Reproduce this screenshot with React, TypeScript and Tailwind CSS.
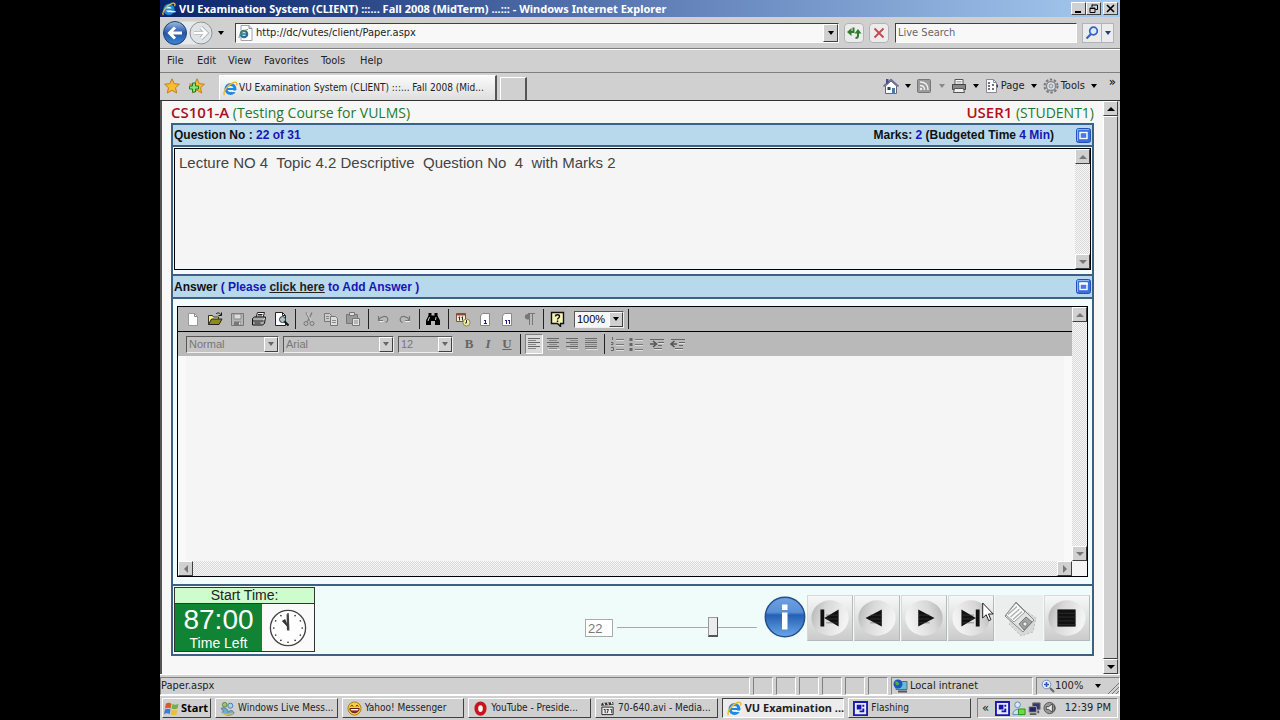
import { useState, type ReactNode } from "react";

const raised =
  "border border-t-white border-l-white border-r-[#404040] border-b-[#404040] bg-[#d0d0d0]";
const sunken = "border border-t-[#808080] border-l-[#808080] border-r-white border-b-white";

function Caret({ className = "text-black" }: { className?: string }) {
  return (
    <svg viewBox="0 0 6 4" className={`h-1 w-1.5 shrink-0 ${className}`} aria-hidden="true">
      <path d="M0 0h6L3 4z" fill="currentColor" />
    </svg>
  );
}

function IeLogo({ className = "h-4 w-4" }: { className?: string }) {
  return (
    <svg viewBox="0 0 16 16" className={`shrink-0 ${className}`} aria-hidden="true">
      <circle cx="8" cy="8.500" r="4.800" fill="#eaf6ff" stroke="#2388d8" strokeWidth="3.200" />
      <path d="M4 8.500h9" stroke="#2388d8" strokeWidth="2.200" />
      <path d="M9.500 10.200h6v1.600H9.500z" fill="#eaf6ff" />
      <path d="M1.600 15C-.8 12 5.500 3.500 11.500 1.600c3-.8 4 .8 2.800 3.200" fill="none" stroke="#efb92e" strokeWidth="1.500" />
    </svg>
  );
}

function DocIe() {
  return (
    <svg viewBox="0 0 16 16" className="h-4 w-4 shrink-0" aria-hidden="true">
      <path d="M3 .5h8l3 3v12H3z" fill="#fff" stroke="#a0a4aa" />
      <path d="M11 .5v3h3" fill="#dde" stroke="#8a8f98" />
      <circle cx="6" cy="9" r="3.200" fill="#dff1ff" stroke="#2a6f9c" strokeWidth="2.200" />
      <path d="M3.500 9h5.500" stroke="#2a6f9c" strokeWidth="1.500" />
      <path d="M1 13C1 9 6 5 10 4.500" fill="none" stroke="#6aa53b" />
    </svg>
  );
}

function Arrow({ dir, active = true }: { dir: "up" | "down" | "left" | "right"; active?: boolean }) {
  const paths = { up: "M0 6h8L4 2z", down: "M0 2h8L4 6z", left: "M6 0v8L2 4z", right: "M2 0v8l4-4z" };
  return (
    <svg viewBox="0 0 8 8" className="h-2 w-2" aria-hidden="true">
      <path d={paths[dir]} fill={active ? "#000" : "#777"} />
    </svg>
  );
}

function ScrollButton({ dir, active }: { dir: "up" | "down" | "left" | "right"; active?: boolean }) {
  return (
    <button
      type="button"
      aria-label={`Scroll ${dir}`}
      className={`flex h-[15px] w-[15px] shrink-0 items-center justify-center ${raised}`}
    >
      <Arrow dir={dir} active={active} />
    </button>
  );
}

const dither = "bg-[repeating-conic-gradient(#f8f8f8_0_25%,#d8d8d8_0_50%)] bg-[length:2px_2px]";

function VScroll() {
  return (
    <div className={`flex w-[15px] shrink-0 flex-col justify-between ${dither}`}>
      <ScrollButton dir="up" active={false} />
      <ScrollButton dir="down" active={false} />
    </div>
  );
}

function Tool({ label, children }: { label: string; children: ReactNode }) {
  return (
    <button type="button" aria-label={label} title={label} className="flex h-5 w-[22px] shrink-0 items-center justify-center">
      <svg viewBox="0 0 16 16" className="h-4 w-4" fill="none" aria-hidden="true">
        {children}
      </svg>
    </button>
  );
}

function Sep({ className = "w-[6px]" }: { className?: string }) {
  return (
    <span className={`flex shrink-0 justify-center ${className}`}>
      <span className="h-5 w-px bg-[#222]" />
    </span>
  );
}

function Combo({
  label,
  options,
  className,
  active = false,
}: {
  label: string;
  options: string[];
  className: string;
  active?: boolean;
}) {
  return (
    <span
      className={`relative flex h-[17px] shrink-0 border border-t-[#555] border-l-[#555] border-r-[#eee] border-b-[#eee] ${
        active ? "bg-[#f7f7f7] text-black" : "bg-[#c4c4c4] text-[#777]"
      } ${className}`}
    >
      <select aria-label={label} className="w-full appearance-none bg-transparent pr-4 pl-0.5 font-[Liberation_Sans,sans-serif] text-[11px] leading-[15px]">
        {options.map((o) => (
          <option key={o}>{o}</option>
        ))}
      </select>
      <span className={`pointer-events-none absolute inset-y-0 right-0 flex w-[14px] items-center justify-center ${raised}`}>
        <Caret className={active ? "text-black" : "text-[#666]"} />
      </span>
    </span>
  );
}

function PanelToggle({ label, open = false }: { label: string; open?: boolean }) {
  return (
    <button type="button" aria-label={label} className="h-[15px] w-[15px] shrink-0">
      <svg viewBox="0 0 15 15" className="h-full w-full" aria-hidden="true">
        <rect x=".5" y=".5" width="14" height="14" rx="2" fill="#3a6fe0" stroke="#2450b8" />
        <path d="M1.500 13V1.500H13" fill="none" stroke="#8fb2f4" />
        <rect x="4" y="4.500" width="7" height="6" fill="#4a78de" stroke="#fff" strokeWidth="1.400" />
        {open && <path d="M3.300 4.500h8.400" stroke="#fff" strokeWidth="2.400" />}
      </svg>
    </button>
  );
}

function StandardToolbar() {
  return (
    <div className="flex h-[25px] items-center border-b border-black bg-[#b9b9b9] pl-1">
      <Tool label="New">
        <path d="M3.500 2.500h6l3 3v9h-9z" fill="#fff" stroke="#999" />
        <path d="M9.500 2.500v3h3" stroke="#888" />
      </Tool>
      <Tool label="Open">
        <path d="M1.500 13.500v-9h4l1 1.500h5v2" fill="#f3ee8a" stroke="#333" />
        <path d="M1.500 13.500l3-5.500h10.500l-3 5.500z" fill="#8f8a1f" stroke="#222" />
        <path d="M9 3c1.500-1.500 3.500-1.500 5 .8M14.500 1.500v3h-3" stroke="#111" />
      </Tool>
      <Tool label="Save">
        <path d="M2.500 2.500h12v12h-12z" fill="#b5b5b5" stroke="#777" />
        <path d="M5 3h7v5H5z" fill="#ddd" stroke="#888" />
        <path d="M5 10.500h7v4H5z" fill="#777" />
        <path d="M10 11.500h1.500v2H10z" fill="#eee" />
      </Tool>
      <Tool label="Print">
        <path d="M5 6.500l1.500-5h7l-1.500 5" fill="#fff" stroke="#222" />
        <path d="M1.500 7.500l2-1.500h11l-1 6.500-2 1.500h-10z" fill="#aaa" stroke="#111" />
        <path d="M7 3.500h4.500M6.500 5h4.500M2 10h10.500M3.500 12h6" stroke="#222" />
        <path d="M12.500 8.500l1.500-1" stroke="#fff" />
      </Tool>
      <Tool label="Print preview">
        <path d="M2.500 1.500h7l3 3v10h-10z" fill="#fff" stroke="#222" />
        <path d="M9.500 1.500v3h3" stroke="#222" />
        <circle cx="9.500" cy="8.500" r="3" fill="#a9c3cb" stroke="#333" />
        <path d="M11.500 10.500l4 4" stroke="#111" strokeWidth="2" />
      </Tool>
      <Sep />
      <Tool label="Cut">
        <path d="M5 1.500l4.500 9M11 1.500l-4.500 9" stroke="#777" strokeWidth="1.200" />
        <path d="M6 2l4.500 9" stroke="#eee" strokeWidth=".7" />
        <circle cx="5" cy="12.500" r="2" stroke="#777" />
        <circle cx="11" cy="12.500" r="2" stroke="#777" />
      </Tool>
      <Tool label="Copy">
        <path d="M1.500 2.500h5l2 2v6h-7z" fill="#ccc" stroke="#777" />
        <path d="M7.500 5.500h5l2 2v7h-7z" fill="#ddd" stroke="#777" />
        <path d="M3 5.500h3M3 7.500h3M9 9.500h4M9 11.500h4" stroke="#888" />
      </Tool>
      <Tool label="Paste">
        <path d="M1.500 3.500h11v9h-11z" fill="#999" stroke="#777" />
        <path d="M4.500 1.500h5v3h-5z" fill="#ddd" stroke="#777" />
        <path d="M7.500 7.500h7v7h-7z" fill="#e4e4e4" stroke="#777" />
        <path d="M9 10h4M9 12h4" stroke="#888" />
      </Tool>
      <Sep className="w-2" />
      <Tool label="Undo">
        <path d="M3.500 5v4.500H8M3.500 9c2.500-4 7.500-4.500 9-2 1 2.500-.5 4-2 4.500" stroke="#777" strokeWidth="1.200" />
        <path d="M4.500 10.500H8.500" stroke="#eee" />
      </Tool>
      <Tool label="Redo">
        <path d="M12.500 5v4.500H8M12.500 9C10 5 5 4.500 3.500 7c-1 2.500.5 4 2 4.500" stroke="#777" strokeWidth="1.200" />
        <path d="M8 10.500h5" stroke="#eee" />
      </Tool>
      <Sep />
      <Tool label="Find">
        <path d="M3.500 2h3v2.500h3V2h3v2.500l2.500 5V14H10v-4H6v4H1V9.500l2.500-5z" fill="#000" />
        <path d="M4.500 6l-1.500 4M11 6l-.5 3" stroke="#ccc" />
      </Tool>
      <Sep className="w-2" />
      <Tool label="Insert date and time">
        <path d="M1.500 2.500h9v8h-9z" fill="#f5ead8" stroke="#8a4b3a" />
        <path d="M1.500 3.500h9" stroke="#8a4b3a" strokeWidth="2" />
        <path d="M4.500 5.500v4M7.500 5.500v4M3.500 6.500h1M6.500 6.500h1" stroke="#333" />
        <circle cx="11.500" cy="11.500" r="3.500" fill="#f1efa0" stroke="#8e8b48" />
        <path d="M11.500 9v3H10" stroke="#333" />
      </Tool>
      <Tool label="Footnote">
        <path d="M5.500 2.500h7v12h-9V5z" fill="#fff" stroke="#888" />
        <path d="M8.500 9v4M7 9.500h1.500M7 12.500h3" stroke="#1c1c90" />
      </Tool>
      <Tool label="Endnote">
        <path d="M5.500 2.500h7v12h-9V5z" fill="#fff" stroke="#888" />
        <path d="M7.500 9v4M10.500 9v4M6 9.500h1.500M9 9.500h1.500" stroke="#1c1c90" />
      </Tool>
      <Tool label="Show paragraph marks">
        <path d="M8.500 3v11M11.500 3v11M7 2.500h7" stroke="#777" />
        <path d="M8 3H6a2.800 2.800 0 0 0 0 5.500h2z" fill="#777" />
      </Tool>
      <Sep />
      <Tool label="Help">
        <path d="M2.500 1.500h12v11h-3v3l-3-3h-6z" fill="#f6f3b3" stroke="#111" strokeWidth="1.400" />
        <path d="M6.500 5.500c0-2.300 4-2.300 4 0 0 1.500-2 1.500-2 3" stroke="#111" strokeWidth="1.400" />
        <path d="M7.800 9.500h1.500V11H7.800z" fill="#111" />
      </Tool>
      <Combo label="Zoom" options={["100%", "75%", "150%"]} className="ml-1.5 w-[50px]" active />
      <Sep className="w-2" />
    </div>
  );
}

function Lines({ rows }: { rows: [number, number][] }) {
  return (
    <>
      {rows.map(([a, b], i) => (
        <path key={i} d={`M${a} ${2.5 + i * 2}H${b}`} stroke={i % 2 ? "#888" : "#666"} />
      ))}
      <path d="M3 13.500h12" stroke="#ddd" />
    </>
  );
}

function FormatToolbar() {
  return (
    <div className="flex h-6 items-center bg-[#b9b9b9] pl-2">
      <Combo label="Style" options={["Normal", "Heading"]} className="w-[93px]" />
      <Combo label="Font" options={["Arial", "Courier"]} className="ml-1 w-[111px]" />
      <Combo label="Font size" options={["12", "14"]} className="ml-1 w-[55px]" />
      <span className="ml-1.5 flex font-[Liberation_Serif,serif] text-[13px] leading-5 text-[#666]">
        <button type="button" aria-label="Bold" className="w-5 font-bold">B</button>
        <button type="button" aria-label="Italic" className="w-[18px] font-bold italic">I</button>
        <button type="button" aria-label="Underline" className="w-5 font-bold underline">U</button>
      </span>
      <Sep />
      <span className="ml-0.5 flex">
        <span className={`flex h-5 w-[18px] items-center justify-center bg-[#dadada] ${sunken}`}>
          <Tool label="Align left"><Lines rows={[[2, 14], [2, 10], [2, 14], [2, 10], [2, 14], [2, 10]]} /></Tool>
        </span>
        <span className="flex w-[19px] justify-center"><Tool label="Center"><Lines rows={[[2, 14], [4, 12], [2, 14], [4, 12], [2, 14], [4, 12]]} /></Tool></span>
        <span className="flex w-[19px] justify-center"><Tool label="Align right"><Lines rows={[[2, 14], [6, 14], [2, 14], [6, 14], [2, 14], [6, 14]]} /></Tool></span>
        <span className="flex w-[19px] justify-center"><Tool label="Justify"><Lines rows={[[2, 14], [2, 14], [2, 14], [2, 14], [2, 14], [2, 14]]} /></Tool></span>
      </span>
      <Sep className="w-2" />
      <span className="flex">
        <span className="flex w-[18px] justify-center"><Tool label="Numbered list">
          <path d="M3.500 1v3M2 6.500h2v2H2M2 11.500h2.500v3H2" stroke="#666" />
          <path d="M7 3.500h8M7 8.500h8M7 13.500h8" stroke="#777" />
          <path d="M7 4.500h8M7 9.500h8M7 14.500h8" stroke="#ddd" />
        </Tool></span>
        <span className="flex w-5 justify-center"><Tool label="Bulleted list">
          <path d="M1.500 2h3v3h-3zM1.500 7h3v3h-3zM1.500 12h3v3h-3z" fill="#666" />
          <path d="M7 3.500h8M7 8.500h8M7 13.500h8" stroke="#777" />
          <path d="M7 4.500h8M7 9.500h8M7 14.500h8" stroke="#ddd" />
        </Tool></span>
        <span className="flex w-[22px] justify-center"><Tool label="Increase indent">
          <path d="M1 3.500h14M9 6.500h6M9 9.500h4M5 12.500h8" stroke="#666" />
          <path d="M9 7.500h6M5 13.500h8" stroke="#ddd" />
          <path d="M1 8h5M4 5l3.500 3L4 11" stroke="#555" strokeWidth="1.600" />
        </Tool></span>
        <span className="flex w-5 justify-center"><Tool label="Decrease indent">
          <path d="M1 3.500h14M9 6.500h6M9 9.500h4M5 12.500h8" stroke="#666" />
          <path d="M9 7.500h6M5 13.500h8" stroke="#ddd" />
          <path d="M2 8h5M4.500 5L1 8l3.500 3" stroke="#555" strokeWidth="1.600" />
        </Tool></span>
      </span>
    </div>
  );
}

function Clock() {
  return (
    <svg viewBox="0 0 40 40" className="h-[38px] w-[38px]" aria-hidden="true">
      <circle cx="20" cy="20" r="18.500" fill="#fff" stroke="#444" strokeWidth="1.400" />
      {[0, 30, 60, 90, 120, 150, 180, 210, 240, 270, 300, 330].map((a) => (
        <circle key={a} cx="20" cy="5" r=".9" fill="#333" transform={`rotate(${a} 20 20)`} />
      ))}
      <path d="M18.500 5.500h2.400L21.500 22.500h-2.600z" fill="#444" />
      <path d="M13.500 12.500l3.500-2 4 10z" fill="#333" />
    </svg>
  );
}

function NavButton({ label, children }: { label: string; children: ReactNode }) {
  return (
    <button
      type="button"
      aria-label={label}
      className="relative flex h-[46px] w-[46px] shrink-0 items-center justify-center border border-t-[#d8d8d8] border-l-[#d8d8d8] border-r-[#b8b8b8] border-b-[#b8b8b8] bg-gradient-to-b from-[#f6f8f8] to-[#cbcbcb]"
    >
      <svg viewBox="0 0 46 46" className="h-[44px] w-[44px]" aria-hidden="true">
        {children}
      </svg>
    </button>
  );
}

function RoundShade({ id, flip = false }: { id: string; flip?: boolean }) {
  return (
    <>
      <defs>
        <linearGradient id={id} x1={flip ? "1" : "0"} y1="0" x2={flip ? "0" : "1"} y2=".3">
          <stop offset="0" stopColor="#b0b0b0" />
          <stop offset=".4" stopColor="#d8d8d8" />
          <stop offset="1" stopColor="#f3f3f3" />
        </linearGradient>
      </defs>
      <ellipse cx="23" cy="23" rx="19.500" ry="18.500" fill={`url(#${id})`} />
    </>
  );
}

function Cursor() {
  return (
    <svg viewBox="0 0 12 20" className="pointer-events-none absolute top-[7px] left-[34px] z-10 h-5 w-3" aria-hidden="true">
      <path d="M.7 1v15l3.500-3.300 2.500 6 2.200-1-2.400-5.700h4.700z" fill="#fff" stroke="#222" />
    </svg>
  );
}

function InfoIcon() {
  return (
    <svg viewBox="0 0 42 42" className="h-[42px] w-[42px]" aria-hidden="true">
      <defs>
        <linearGradient id="info-fill" x1="0" y1="0" x2="0" y2="1">
          <stop offset="0" stopColor="#6f9fdf" />
          <stop offset=".38" stopColor="#5a8fd8" />
          <stop offset=".45" stopColor="#2460b4" />
          <stop offset="1" stopColor="#6ba6ea" />
        </linearGradient>
      </defs>
      <circle cx="21" cy="21" r="19.700" fill="url(#info-fill)" stroke="#24508f" strokeWidth="1.500" />
      <path d="M18 8.500h5.500v5.500H18zM18 16.500h5.500v17H18z" fill="#fff" />
    </svg>
  );
}

function Timer() {
  return (
    <div className="w-[141px] border border-[#333] font-[Liberation_Sans,sans-serif]">
      <div className="border-b border-[#333] bg-[#cdfccd] text-center text-[14px] leading-[15px] text-[#222]">Start Time:</div>
      <div className="flex h-[47px]">
        <div className="flex w-[87px] flex-col items-center bg-[#108434] text-white">
          <span className="text-[28px] leading-8">87:00</span>
          <span className="text-[14px] leading-[15px]">Time Left</span>
        </div>
        <div className="flex flex-1 items-center justify-center bg-[#fafafa]">
          <Clock />
        </div>
      </div>
    </div>
  );
}

function ExamFooter() {
  const [question, setQuestion] = useState(22);
  return (
    <div className="flex h-[68px] justify-between bg-[#effcfa] pt-px pr-0.5 pb-0.5 pl-px">
      <Timer />
      <div className="flex items-start pt-2">
        <input
          type="text"
          aria-label="Question number"
          value={question}
          onChange={(e) => setQuestion(Number(e.target.value) || 1)}
          className="mt-6 mr-1 h-[18px] w-7 border border-[#aaa] bg-white pl-0.5 font-[Liberation_Sans,sans-serif] text-[13px] leading-4 text-[#777]"
        />
        <input
          type="range"
          min={1}
          max={31}
          value={question}
          aria-label="Question slider"
          onChange={(e) => setQuestion(Number(e.target.value))}
          className="mt-[22px] mr-[7px] h-5 w-[140px] appearance-none bg-[linear-gradient(#a8a8a8,#a8a8a8)] bg-[length:100%_1px] bg-center bg-no-repeat [&::-webkit-slider-thumb]:h-5 [&::-webkit-slider-thumb]:w-2.5 [&::-webkit-slider-thumb]:appearance-none [&::-webkit-slider-thumb]:border [&::-webkit-slider-thumb]:border-t-[#999] [&::-webkit-slider-thumb]:border-r-[#555] [&::-webkit-slider-thumb]:border-b-2 [&::-webkit-slider-thumb]:border-b-[#555] [&::-webkit-slider-thumb]:border-l-[#999] [&::-webkit-slider-thumb]:bg-[#ececec]"
        />
        <button type="button" aria-label="Information" className="mr-px pt-px">
          <InfoIcon />
        </button>
        <div className="flex gap-px">
          <NavButton label="First question">
            <RoundShade id="n1" />
            <path d="M13 14h4v18h-4zM17 23l15-9v18z" fill="#111" />
            <path d="M19 20h13M19 24h13M19 28h13" stroke="#444" strokeWidth=".6" />
          </NavButton>
          <NavButton label="Previous question">
            <RoundShade id="n2" />
            <path d="M11 23l17-9v18z" fill="#111" />
            <path d="M16 20h12M16 24h12M16 28h12" stroke="#444" strokeWidth=".6" />
          </NavButton>
          <NavButton label="Next question">
            <RoundShade id="n3" flip />
            <path d="M34 23l-17-9v18z" fill="#111" />
            <path d="M17 20h12M17 24h12M17 28h12" stroke="#444" strokeWidth=".6" />
          </NavButton>
          <span className="relative flex">
            <NavButton label="Last question">
              <RoundShade id="n4" flip />
              <path d="M28 14h4v18h-4zM28 23l-15-9v18z" fill="#111" />
              <path d="M14 20h12M14 24h12M14 28h12" stroke="#444" strokeWidth=".6" />
            </NavButton>
            <Cursor />
          </span>
          <button type="button" aria-label="Save answer" className="flex h-[46px] w-[48px] items-center justify-center bg-[#eceeee] pl-1">
            <svg viewBox="0 0 40 40" className="h-10 w-10" fill="none" aria-hidden="true">
              <path d="M17 8L35 20 32 34 20 38 8 26z" fill="#d8d8d8" stroke="#bbb" strokeDasharray="2 2" />
              <path d="M15 4L33 22 22 34 4 18z" fill="#dfe3e1" stroke="#888" />
              <path d="M15 5l9 9-11 10-8-7z" fill="#fafafa" stroke="#999" />
              <path d="M16 8.500l-9 8M18.500 11l-9 8M21 13.500l-9 8" stroke="#a5b3ac" strokeWidth="1.400" />
              <path d="M25 19l6 5-8 8-5-6z" fill="#a4a4a4" stroke="#777" />
              <circle cx="24" cy="26" r="2.200" fill="#eee" stroke="#777" />
            </svg>
          </button>
          <NavButton label="Stop">
            <RoundShade id="n5" />
            <path d="M13 14h19v18H13z" fill="#111" />
            <path d="M13 18h19M13 22h19M13 26h19M13 30h19" stroke="#3a3a3a" strokeWidth=".7" />
          </NavButton>
        </div>
      </div>
    </div>
  );
}

function TitleBar() {
  return (
    <header className="flex h-[17px] items-center gap-[3px] bg-gradient-to-r from-[#0a246a] via-[#5d7cb5] to-[#a6caf0] pr-0.5 pl-0.5 text-white">
      <IeLogo className="h-[14px] w-[14px]" />
      <h1 className="min-w-0 flex-1 overflow-hidden font-[Noto_Sans,sans-serif] text-[11px] leading-4 font-bold whitespace-nowrap">
        VU Examination System (CLIENT) :::... Fall 2008 (MidTerm) ...::: - Windows Internet Explorer
      </h1>
      <div className="flex text-black">
        <button type="button" aria-label="Minimize" className={`flex h-[13px] w-[15px] items-center justify-center ${raised}`}>
          <svg viewBox="0 0 9 9" className="h-[9px] w-[9px]" aria-hidden="true"><path d="M1 7h6v2H1z" /></svg>
        </button>
        <button type="button" aria-label="Restore" className={`flex h-[13px] w-[15px] items-center justify-center ${raised}`}>
          <svg viewBox="0 0 9 9" className="h-[9px] w-[9px]" fill="none" stroke="#000" aria-hidden="true">
            <path d="M3 1h5.500v4.500H6.500M3 3V.5M1 4h5v4.500H1zM1 4.500h5" />
          </svg>
        </button>
        <button type="button" aria-label="Close" className={`ml-0.5 flex h-[13px] w-[15px] items-center justify-center ${raised}`}>
          <svg viewBox="0 0 9 9" className="h-[9px] w-[9px]" aria-hidden="true"><path d="M1 1l7 7M8 1L1 8" stroke="#000" strokeWidth="1.600" /></svg>
        </button>
      </div>
    </header>
  );
}

function AddressBar() {
  return (
    <div className="flex h-8 items-center border-b border-[#808080] pr-1.5 pl-[3px]">
      <svg viewBox="0 0 50 26" className="h-[26px] w-[50px] shrink-0" role="img" aria-label="Back and forward">
        <defs>
          <linearGradient id="back" x1="0" y1="0" x2="0" y2="1">
            <stop offset="0" stopColor="#9fbcea" />
            <stop offset=".5" stopColor="#2456a8" />
            <stop offset="1" stopColor="#3f86d8" />
          </linearGradient>
        </defs>
        <path d="M11 1.500h28v23H11z" fill="#e5e8ec" />
        <circle cx="38" cy="13" r="11" fill="#dfe3e6" stroke="#8c9296" />
        <circle cx="12" cy="13" r="11.500" fill="url(#back)" stroke="#26406c" />
        <path d="M19 13H7M12 7.500L6.500 13l5.500 5.500" fill="none" stroke="#fff" strokeWidth="3" />
        <path d="M31 13h12M38 7.500l5.500 5.500-5.500 5.500" fill="none" stroke="#aab0b5" strokeWidth="4" />
        <path d="M31 13h12M38 7.500l5.500 5.500-5.500 5.500" fill="none" stroke="#fff" strokeWidth="2.400" />
      </svg>
      <span className="ml-[5px]"><Caret /></span>
      <div className="ml-[11px] flex h-5 flex-1 items-center border border-t-[#404040] border-l-[#404040] border-r-white border-b-white bg-[#f9f8f8] pl-0.5">
        <DocIe />
        <input
          type="text"
          aria-label="Address"
          defaultValue="http://dc/vutes/client/Paper.aspx"
          className="min-w-0 flex-1 bg-transparent pl-0.5 text-[11px] leading-4 text-[#222] outline-none"
        />
        <button type="button" aria-label="Address history" className={`flex h-[18px] w-[15px] items-center justify-center ${raised}`}><Caret /></button>
      </div>
      <button type="button" aria-label="Refresh" className="ml-[5px] flex h-5 w-5 items-center justify-center rounded-sm border border-[#b0b4b8] bg-[#ececec]">
        <svg viewBox="0 0 16 16" className="h-4 w-4" fill="none" stroke="#2f7b2f" strokeWidth="2" aria-hidden="true">
          <path d="M4 7h3.500V2.500M12 7v3.500c0 1.500-.8 2.500-2.500 2.500" />
          <path d="M1 7l4.500-4v8zM8.500 8.500L12 4l3.500 4.500z" fill="#2f7b2f" stroke="none" />
        </svg>
      </button>
      <button type="button" aria-label="Stop loading" className="ml-[5px] flex h-5 w-5 items-center justify-center rounded-sm border border-[#b0b4b8] bg-[#ececec]">
        <svg viewBox="0 0 12 12" className="h-3 w-3" aria-hidden="true"><path d="M1.500 1.500l9 9M10.500 1.500l-9 9" stroke="#c24a4a" strokeWidth="1.800" /></svg>
      </button>
      <input
        type="text"
        aria-label="Live Search"
        placeholder="Live Search"
        className="ml-[6px] h-5 w-[182px] shrink-0 border border-t-[#404040] border-l-[#404040] border-r-white border-b-white bg-[#f9f8f8] pl-0.5 text-[11px] leading-4 placeholder:text-[#666]"
      />
      <button type="button" aria-label="Search" className="ml-[5px] flex h-5 w-5 items-center justify-center border border-[#b0b4b8] bg-[#ececec]">
        <svg viewBox="0 0 14 14" className="h-3.5 w-3.5" fill="none" aria-hidden="true">
          <circle cx="8.500" cy="5" r="3.800" fill="#dceaff" stroke="#3463b8" strokeWidth="1.700" />
          <path d="M6 8l-4.500 4.500" stroke="#3463b8" strokeWidth="2.200" />
        </svg>
      </button>
      <button type="button" aria-label="Search options" className="flex h-5 w-3 items-center justify-center border border-l-0 border-[#b0b4b8] bg-[#ececec]">
        <Caret className="text-[#1d3f78]" />
      </button>
    </div>
  );
}

function MenuBar() {
  const items: [string, string][] = [
    ["File", "w-[30px]"],
    ["Edit", "w-[31px]"],
    ["View", "w-9"],
    ["Favorites", "w-[57px]"],
    ["Tools", "w-[39px]"],
    ["Help", "w-8"],
  ];
  return (
    <nav aria-label="Menu" className="flex h-6 items-center border-t border-b border-t-white border-b-[#808080] pl-[7px] text-[11px] leading-4 text-[#222]">
      {items.map(([label, width]) => (
        <button key={label} type="button" className={`text-left ${width}`}>
          {label}
        </button>
      ))}
    </nav>
  );
}

function StarIcon({ plus = false }: { plus?: boolean }) {
  return (
    <svg viewBox="0 0 16 16" className="h-4 w-4" aria-hidden="true">
      <path d="M8 .8l2.200 4.900 5.200.5-3.900 3.500 1.200 5.300L8 12.300 3.300 15l1.200-5.300L.6 6.200l5.200-.5z" fill="#f7bd35" stroke="#c47d13" />
      {plus && <path d="M3.500 5h3v3h3v3h-3v3h-3v-3h-3V8h3z" fill="#8fe07c" stroke="#247a20" />}
    </svg>
  );
}

function TabBar() {
  return (
    <div className="flex h-7 items-end border-b border-[#333] pl-1">
      <button type="button" aria-label="Favorites center" className="mb-1.5 w-4"><StarIcon /></button>
      <button type="button" aria-label="Add to favorites" className="mb-1.5 ml-[9px] w-4"><StarIcon plus /></button>
      <button
        type="button"
        className="ml-[14px] flex h-[25px] w-[278px] items-center gap-px border-t border-r-2 border-l border-t-white border-r-[#555] border-l-white bg-gradient-to-b from-[#fafafa] to-[#dedede] pl-[3px] text-[10px] leading-4 text-[#222]"
      >
        <IeLogo className="h-[15px] w-[15px]" />
        <span className="whitespace-nowrap">VU Examination System (CLIENT) :::... Fall 2008 (Mid...</span>
      </button>
      <button type="button" aria-label="New tab" className="ml-[3px] h-[23px] w-[27px] border-t border-r-2 border-l border-t-white border-r-[#555] border-l-white" />
      <div className="mb-1.5 ml-auto flex h-4 items-center pr-5 text-[11px] leading-4 text-[#222]">
        <svg viewBox="0 0 16 16" className="h-4 w-4" role="img" aria-label="Home">
          <path d="M2.500 8v7.500h11V8L8 3z" fill="#fff" stroke="#667" />
          <path d="M.5 8.500L8 1.500l7.500 7" fill="none" stroke="#6b6b98" strokeWidth="1.600" />
          <path d="M3 1h2.500v4L3 6z" fill="#4a4a9a" />
          <path d="M9 10h3v5.500H9z" fill="#4c79a8" />
          <path d="M4.500 9h3v3h-3z" fill="#345" />
        </svg>
        <span className="ml-1.5"><Caret /></span>
        <svg viewBox="0 0 14 14" className="ml-1.5 h-3.5 w-3.5" fill="none" role="img" aria-label="Feeds">
          <rect x=".5" y=".5" width="13" height="13" rx="1" fill="#9b9b9b" stroke="#777" />
          <path d="M3 3c5 0 8 3 8 8M3 6.500c3 0 4.500 1.500 4.500 4.500" stroke="#eee" strokeWidth="1.500" />
          <circle cx="4" cy="10" r="1.200" fill="#eee" />
        </svg>
        <span className="ml-2"><Caret className="text-[#888]" /></span>
        <svg viewBox="0 0 16 16" className="ml-1.5 h-4 w-4" role="img" aria-label="Print">
          <path d="M4 1.500h8V7H4z" fill="#fff" stroke="#555" />
          <path d="M1.500 6.500h13v5h-13z" fill="#888" stroke="#444" />
          <path d="M3.500 10.500h9l1 4h-11z" fill="#eee" stroke="#555" />
          <path d="M5.500 3.500h5M5.500 5h5" stroke="#aaa" />
        </svg>
        <span className="ml-1.5"><Caret /></span>
        <svg viewBox="0 0 14 16" className="ml-1.5 h-4 w-3.5" fill="none" role="img" aria-label="Page">
          <path d="M1.500 1.500h7l3 3v10h-10z" fill="#fbfbfb" stroke="#889" />
          <path d="M8.500 1.500v3h3" stroke="#889" />
          <path d="M3 5h2M7 7h2M3 8h2M3 11h2M7 11h2" stroke="#445" strokeWidth="1.500" />
          <path d="M13 6v4l-2-2z" fill="#445" />
        </svg>
        <button type="button" className="ml-0.5">Page</button>
        <span className="ml-1.5"><Caret /></span>
        <svg viewBox="0 0 16 16" className="ml-1.5 h-4 w-4" fill="none" role="img" aria-label="Tools">
          <circle cx="8" cy="8" r="6.500" stroke="#777" strokeWidth="2" strokeDasharray="2.400 1.700" />
          <circle cx="8" cy="8" r="4.600" fill="#dce2ea" stroke="#888" strokeWidth="1.500" />
          <circle cx="8" cy="8" r="2" fill="#d0d0d0" stroke="#8a9ab0" />
        </svg>
        <button type="button" className="ml-0.5">Tools</button>
        <span className="ml-1.5"><Caret /></span>
      </div>
      <span className="mr-1 mb-2.5 -ml-2 text-[13px] leading-4">»</span>
    </div>
  );
}

function ExamPage() {
  return (
    <div className="flex min-w-0 flex-1 flex-col bg-[#f8f7f8] pr-[9px] pb-[18px] pl-[9px]">
      <div className="flex h-[22px] items-center justify-between font-[Open_Sans,sans-serif] text-[14px] leading-5 text-[#1f7a2a]">
        <h2>
          <span className="text-[15px] font-semibold text-[#a80f1e]">CS101-A</span> (Testing Course for VULMS)
        </h2>
        <p>
          <span className="text-[15px] font-semibold text-[#b50f1e]">USER1</span> (STUDENT1)
        </p>
      </div>
      <main className="flex flex-1 flex-col border-2 border-[#3d6182] bg-[#f3fbfd] font-[Liberation_Sans,sans-serif]">
        <div className="flex h-[22px] items-center border-b-2 border-[#3d6182] bg-[#b8d8ec] pr-px text-[12px] leading-4 font-bold text-[#111]">
          <h3 className="flex-1 pl-px">
            Question No : <span className="text-[#1616b8]">22 of 31</span>
          </h3>
          <p className="mr-[22px]">
            Marks: <span className="text-[#1616b8]">2</span> (Budgeted Time <span className="text-[#1616b8]">4 Min</span>)
          </p>
          <PanelToggle label="Toggle question panel" />
        </div>
        <section className="mx-px mt-px flex h-[122px] border border-black bg-[#f6f5f6]">
          <p className="flex-1 px-1 pt-1 text-[15px] leading-[19px] whitespace-pre-wrap text-[#444]">
            {"Lecture NO 4  Topic 4.2 Descriptive  Question No  4  with Marks 2"}
          </p>
          <VScroll />
        </section>
        <div className="mt-1 flex h-[25px] items-center border-t-2 border-b-2 border-[#3d6182] bg-[#b8d8ec] pr-px text-[12px] leading-4 font-bold text-[#1616b8]">
          <h3 className="flex-1 pl-px">
            <span className="text-[#111]">Answer</span> ( Please{" "}
            <a href="#answer" className="text-[#222] underline">click here</a> to Add Answer )
          </h3>
          <PanelToggle label="Toggle answer panel" open />
        </div>
        <section id="answer" className="mx-1 my-[7px] flex flex-1 flex-col border border-black bg-[#f6f5f6]">
          <div className="flex flex-1">
            <div className="flex min-w-0 flex-1 flex-col">
              <StandardToolbar />
              <FormatToolbar />
              <textarea aria-label="Answer" className="min-h-32 w-full flex-1 resize-none border-x-8 border-[#f9f9f9] bg-[#f6f5f6] p-1 text-[14px] outline-none" />
            </div>
            <VScroll />
          </div>
          <div className="flex pr-[15px]">
            <div className={`flex flex-1 justify-between ${dither}`}>
              <ScrollButton dir="left" active={false} />
              <ScrollButton dir="right" active={false} />
            </div>
          </div>
        </section>
        <div className="border-t-2 border-[#3d6182]">
          <ExamFooter />
        </div>
      </main>
    </div>
  );
}

function StatusBar() {
  return (
    <div className="flex h-[21px] items-stretch gap-[3px] border-t border-white pt-0.5 text-[11px] leading-4 text-[#222]">
      <div className={`flex-1 ${sunken}`}>Paper.aspx</div>
      {[0, 1, 2, 3, 4, 5].map((n) => (
        <div key={n} className={`w-5 ${sunken}`} />
      ))}
      <div className={`flex w-[142px] items-center gap-0.5 ${sunken}`}>
        <svg viewBox="0 0 16 16" className="h-4 w-4" aria-hidden="true">
          <path d="M4 3.500h11v8H4z" fill="#5fc0dc" stroke="#667" />
          <circle cx="6" cy="6" r="4.500" fill="#1d55b8" />
          <path d="M3 4c2-2 3 0 4 1s-1 3-3 2z" fill="#46b14a" />
          <path d="M6 13.500h9" stroke="#556" strokeWidth="2" />
        </svg>
        Local intranet
      </div>
      <div className={`flex w-[84px] items-center ${sunken} pl-1`}>
        <svg viewBox="0 0 14 14" className="h-3.5 w-3.5" fill="none" aria-hidden="true">
          <circle cx="5.500" cy="5.500" r="4.300" fill="#e7f2ff" stroke="#7a93b5" />
          <path d="M5.500 3v5M3 5.500h5" stroke="#1d5cb8" strokeWidth="1.600" />
          <path d="M9 9l4 4" stroke="#666" strokeWidth="2" />
        </svg>
        100%
        <span className="ml-3"><Caret /></span>
        <svg viewBox="0 0 12 12" className="mt-auto ml-auto h-3 w-3" aria-hidden="true"><path d="M1 12L12 1M5 12l7-7M9 12l3-3" stroke="#777" /></svg>
      </div>
    </div>
  );
}

function SquareLogo() {
  return (
    <svg viewBox="0 0 16 16" className="h-[15px] w-[15px] shrink-0" aria-hidden="true">
      <path d="M1 1h14v14H1z" fill="#e8e8ff" stroke="#1a1ab0" strokeWidth="2" />
      <path d="M4 4h5v5H4zM10 4h2v2h-2zM10 8h2v4H7v-2h3z" fill="#1515a8" />
    </svg>
  );
}

function TaskButton({ label, icon, pressed = false }: { label: string; icon: ReactNode; pressed?: boolean }) {
  return (
    <button
      type="button"
      className={`flex h-5 min-w-0 flex-1 items-center gap-[3px] pl-1 leading-4 text-[#222] ${
        pressed
          ? "border border-t-[#404040] border-l-[#404040] border-r-white border-b-white bg-[#ececec] font-[Noto_Sans,sans-serif] text-[11px] font-bold"
          : `text-[10px] ${raised}`
      }`}
    >
      {icon}
      <span className="whitespace-nowrap">{label}</span>
    </button>
  );
}

function TaskBar() {
  return (
    <footer className="flex h-[25px] items-center border-t border-white px-0.5">
      <button type="button" className={`flex h-5 w-[49px] items-center gap-0.5 pl-px font-[Noto_Sans,sans-serif] text-[11px] leading-4 font-bold ${raised}`}>
        <svg viewBox="0 0 16 16" className="h-[15px] w-[15px] shrink-0" aria-hidden="true">
          <path d="M2 3c2-1.500 4-1.300 6 0L7 8C5 6.800 3.500 6.800 1 8z" fill="#d95a32" />
          <path d="M9 3.300c2 1 4 1 6.500-.3l-1 5C12 9 10 9 8 8.300z" fill="#72b043" />
          <path d="M1 9c2-1.300 4-1 6 0l-1 5c-2-1.200-4-1-6 0z" fill="#4579ce" />
          <path d="M8 9.300c2 1 4 1 6.300 0l-1 5c-2.300 1-4.300.8-6.300-.3z" fill="#edbd34" />
        </svg>
        Start
      </button>
      <div className="ml-1 flex min-w-0 flex-1 gap-1">
        <TaskButton
          label="Windows Live Mess..."
          icon={
            <svg viewBox="0 0 16 16" className="h-[15px] w-[15px] shrink-0" aria-hidden="true">
              <circle cx="5" cy="4" r="2.500" fill="#9fc46a" stroke="#5d8440" />
              <circle cx="11" cy="5" r="2.700" fill="#a8d2ea" stroke="#477a9c" />
              <path d="M1 8c4-2 7 0 8 4 2-3 5-2 6 1-4 3-9 3-13-1 2 0 2-2-1-4z" fill="#72aad0" stroke="#477a9c" />
              <path d="M2 13c4 2 8 2 12 0" stroke="#d9c352" fill="none" strokeWidth="1.500" />
            </svg>
          }
        />
        <TaskButton
          label="Yahoo! Messenger"
          icon={
            <svg viewBox="0 0 16 16" className="h-[15px] w-[15px] shrink-0" aria-hidden="true">
              <circle cx="8" cy="8" r="7" fill="#fbcf3b" stroke="#a87817" />
              <path d="M3 8h10c0 6-10 6-10 0z" fill="#a61f1a" stroke="#5c1a10" />
              <path d="M4 8.500h8v1.500H4z" fill="#fff" />
              <path d="M4 6c.5-2 2-2 2.500 0M9.500 6c.5-2 2-2 2.500 0" stroke="#422" fill="none" />
            </svg>
          }
        />
        <TaskButton
          label="YouTube - Preside..."
          icon={
            <svg viewBox="0 0 16 16" className="h-[15px] w-[15px] shrink-0" aria-hidden="true">
              <ellipse cx="8" cy="8" rx="4.500" ry="5.600" fill="#f4f4f4" stroke="#c9141e" strokeWidth="4" />
            </svg>
          }
        />
        <TaskButton
          label="70-640.avi - Media..."
          icon={
            <svg viewBox="0 0 16 16" className="h-[15px] w-[15px] shrink-0" aria-hidden="true">
              <path d="M2 6.500h12v8H2z" fill="#eee" stroke="#222" />
              <path d="M1 5l1-3 12-1 .5 3z" fill="#333" />
              <path d="M4 2l1 2.500M8 1.500L9 4M12 1l1 2.500" stroke="#eee" strokeWidth="1.300" />
              <path d="M4 9h1.500v4M7 9h2l-1.500 4M11 9h1.500v4" stroke="#222" fill="none" />
            </svg>
          }
        />
        <TaskButton label="VU Examination ..." icon={<IeLogo className="h-[15px] w-[15px]" />} pressed />
        <TaskButton label="Flashing" icon={<SquareLogo />} />
      </div>
      <div className={`ml-1.5 flex h-5 w-[141px] shrink-0 items-center gap-px pl-1 text-[11px] leading-4 text-[#222] ${sunken}`}>
        <span className="w-3 text-[13px] leading-4">«</span>
        <SquareLogo />
        <svg viewBox="0 0 16 16" className="h-[15px] w-[15px] shrink-0" aria-hidden="true">
          <circle cx="7" cy="4" r="3" fill="#d7ecf8" stroke="#4b8fb2" />
          <path d="M2 14.500c0-7 10-8 10 0z" fill="#c4e2f2" stroke="#4b8fb2" />
          <path d="M8 8.500h7v6H8z" fill="#6fdc3c" stroke="#2c8a1d" />
        </svg>
        <svg viewBox="0 0 16 16" className="h-[15px] w-[15px] shrink-0" aria-hidden="true">
          <path d="M6 2h8v7H6z" fill="#35386e" stroke="#777" />
          <path d="M2 6h8v6H2z" fill="#24275c" stroke="#aaa" />
          <path d="M3 14h7M12 10v3" stroke="#555" strokeWidth="2" />
        </svg>
        <svg viewBox="0 0 16 16" className="h-[15px] w-[15px] shrink-0" fill="none" aria-hidden="true">
          <circle cx="7" cy="7.500" r="6" fill="#999" stroke="#555" />
          <path d="M3.500 6h2.500l4-3v9l-4-3H3.500z" fill="#e8e8e8" stroke="#444" />
          <path d="M11.500 5c1.500 2 1.500 4 0 5.500" stroke="#444" />
        </svg>
        <time className="ml-auto pr-1.5 whitespace-nowrap">12:39 PM</time>
      </div>
    </footer>
  );
}

export default function App() {
  return (
    <div className="flex min-h-screen bg-black px-[12.5%] font-[DejaVu_Sans_Condensed,DejaVu_Sans,sans-serif]">
      <div className="flex min-w-0 flex-1 flex-col bg-[#d0d0d0]">
        <TitleBar />
        <AddressBar />
        <MenuBar />
        <TabBar />
        <div className="flex flex-1 border-l-2 border-[#555]">
          <ExamPage />
          <div className="mr-0.5 flex w-[15px] flex-col bg-[#e4e4e4]">
            <ScrollButton dir="up" />
            <div className={`flex-1 ${raised}`} />
            <ScrollButton dir="down" />
          </div>
        </div>
        <StatusBar />
        <TaskBar />
      </div>
    </div>
  );
}
